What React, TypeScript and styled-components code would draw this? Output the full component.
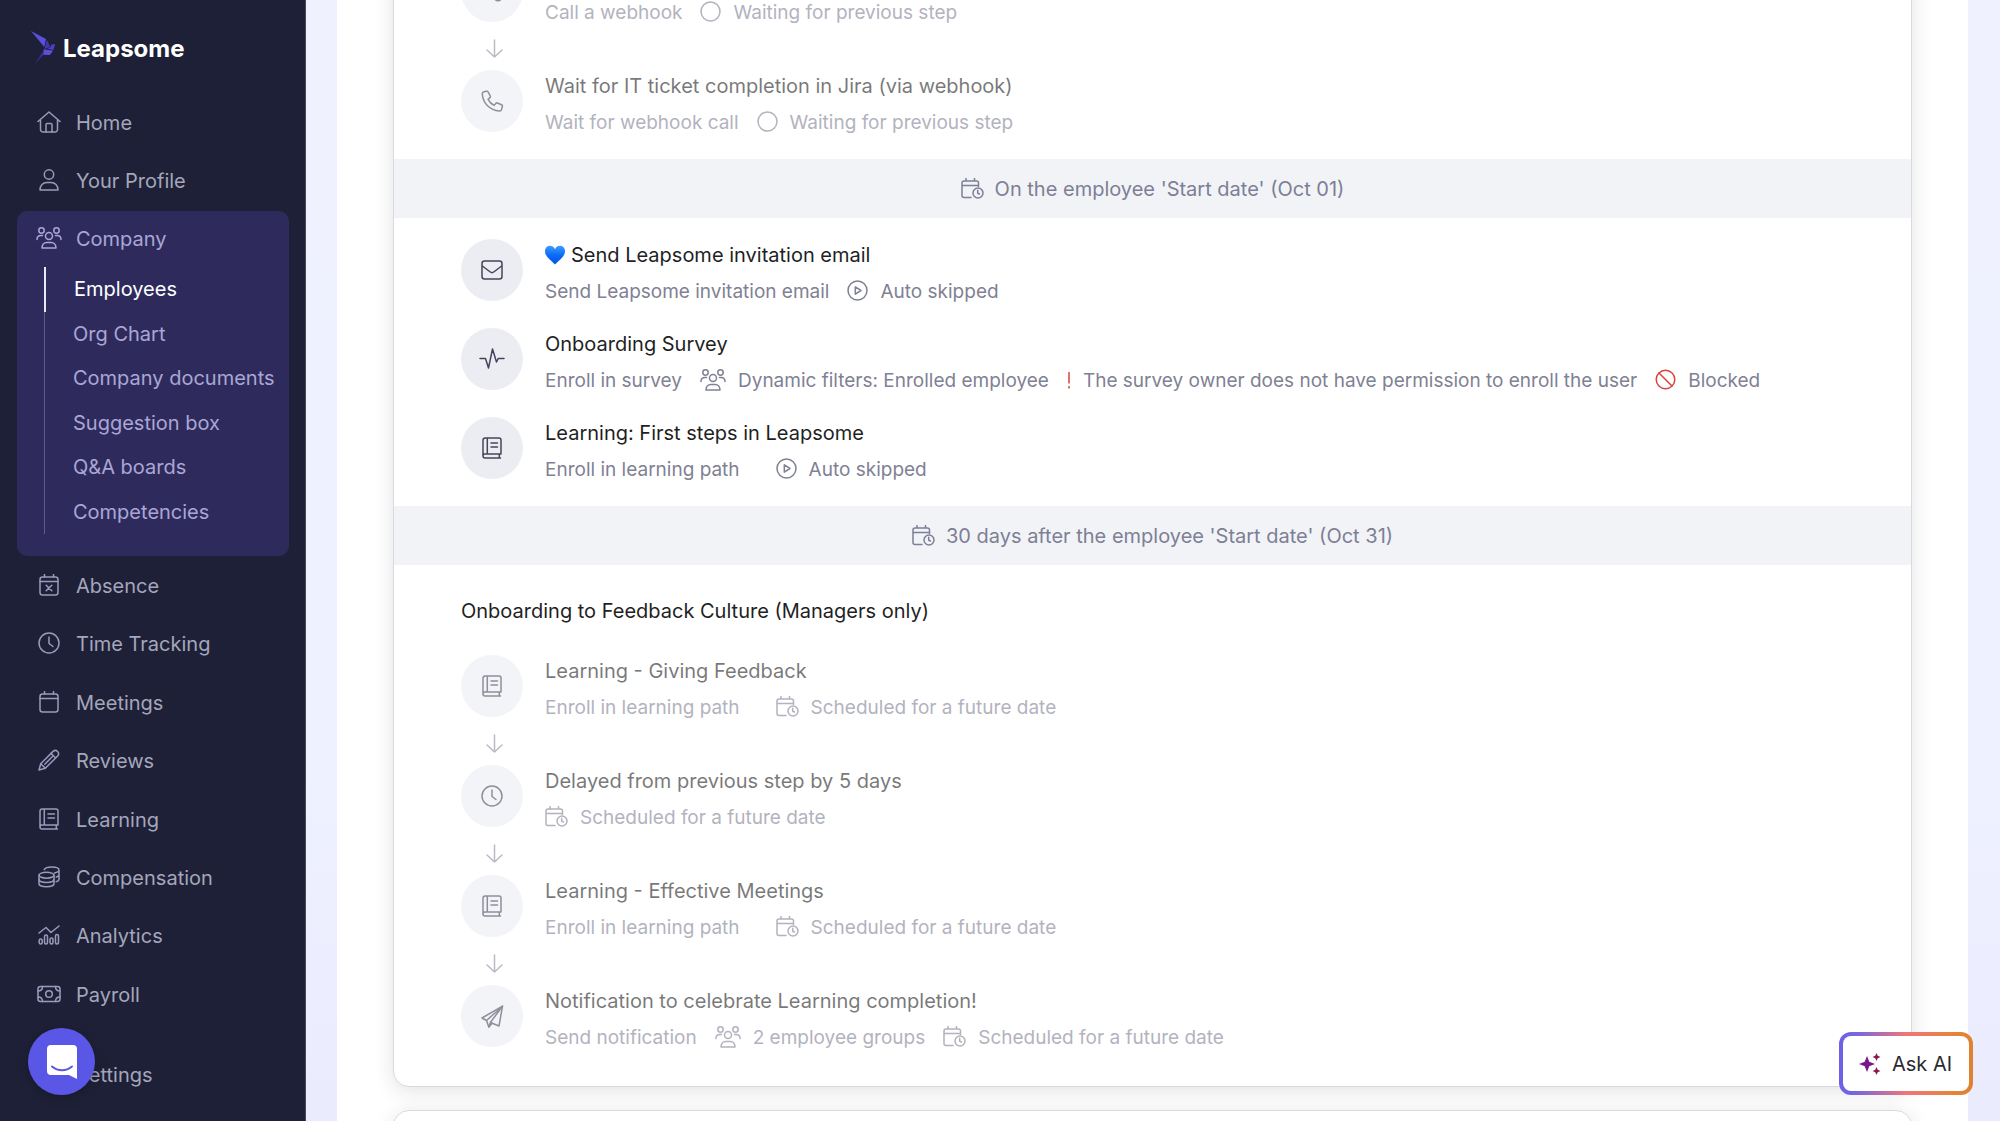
import React from 'react';
import styled, { createGlobalStyle } from 'styled-components';

const GlobalStyle = createGlobalStyle`
  *, *::before, *::after { box-sizing: border-box; }
  html, body { margin: 0; padding: 0; }
  body {
    font-family: Inter, "Liberation Sans", sans-serif;
    font-size: 20px;
    color: #1f1f24;
    background: #f0f2ff;
  }
  ul { list-style: none; margin: 0; padding: 0; }
  a { color: inherit; text-decoration: none; }
  h3, h4, p { margin: 0; font-size: inherit; font-weight: inherit; }
`;

/* ---------- icons ---------- */

type IconName = keyof typeof shapes;

const shapes = {
  home: {
    w: 24, h: 22,
    d: <><path d="M1 10.500 12 1l11 9.500" /><path d="M3.500 9v9.500a2.500 2.500 0 0 0 2.500 2.500h12a2.500 2.500 0 0 0 2.500-2.500V9" /><path d="M9 21v-7.500a1 1 0 0 1 1-1h4a1 1 0 0 1 1 1V21" /></>,
  },
  user: {
    w: 20, h: 22,
    d: <><circle cx="10" cy="5.500" r="4.700" /><path d="M1 21c0-4.500 3-7.500 7-7.500h4c4 0 7 3 7 7.500z" /></>,
  },
  people: {
    w: 26, h: 22,
    d: <><circle cx="5.500" cy="3.500" r="2.700" /><circle cx="20.500" cy="3.500" r="2.700" /><circle cx="13" cy="9" r="3.500" /><path d="M1 12.500c0-2.600 1.600-4 4-4h1.500M25 12.500c0-2.600-1.600-4-4-4h-1.500" /><path d="M6 21c0-3.300 2-5.500 4.800-5.500h4.400C18 15.500 20 17.700 20 21z" /></>,
  },
  absence: {
    w: 20, h: 22,
    d: <><rect x="1" y="3" width="18" height="18" rx="2.500" /><path d="M1 7.500h18M5.500.500V3M14.500.500V3M7.200 11.200l5.600 5.600M12.800 11.200l-5.600 5.600" /></>,
  },
  clock: {
    w: 22, h: 22,
    d: <><circle cx="11" cy="11" r="10" /><path d="M11 5v6.500l4 3" /></>,
  },
  calendar: {
    w: 20, h: 22,
    d: <><rect x="1" y="3" width="18" height="18" rx="2.500" /><path d="M1 7.500h18M5.500.500V3M14.500.500V3" /></>,
  },
  pencil: {
    w: 22, h: 22,
    d: <><path d="M1 21l1.700-6.300L15.300 2.100a3.300 3.300 0 0 1 4.600 4.600L7.300 19.300z" /><path d="M2.700 14.700l4.600 4.600M13 4.400 17.600 9M14.200 7.800l-7.400 7.400" /></>,
  },
  book: {
    w: 20, h: 22,
    d: <><path d="M18.500 17H3a2 2 0 0 0 0 4h15.500M1 19V3.200C1 2 2 1 3.200 1H17c1.200 0 2 .8 2 2v14M17.300 17v4M5.300 1v16M9 6h6.500M9 10h6.500" /></>,
  },
  coins: {
    w: 22, h: 22,
    d: <><ellipse cx="8.500" cy="9.200" rx="7.500" ry="3" /><path d="M1 9.200v8.600c0 1.700 3.400 3 7.500 3s7.500-1.300 7.500-3V9.200" /><path d="M1 13.500c0 1.700 3.400 3 7.500 3s7.500-1.300 7.500-3M6.200 3.700C7 2.200 10 1.100 13.600 1.100c4.100 0 7.400 1.300 7.400 3s-2 2.500-4.500 3M21 4.100v9.400c0 1-1.200 1.700-2.800 2.200M21 8.800c0 1-1.200 1.800-2.800 2.300" /></>,
  },
  chart: {
    w: 22, h: 20,
    d: <><path d="M1 8l7-5.500 5 5L21 1" /><rect x="1.200" y="14" width="3" height="5" rx="1.500" /><rect x="6.500" y="10" width="3" height="9" rx="1.500" /><rect x="12" y="13" width="3" height="6" rx="1.500" /><rect x="17.500" y="9.500" width="3" height="9.500" rx="1.500" /></>,
  },
  cash: {
    w: 24, h: 18,
    d: <><rect x="1" y="1.500" width="22" height="15" rx="2.500" /><circle cx="12" cy="9" r="3.300" /><path d="M1 6c2.800 0 4.500-1.700 4.500-4.500M23 6c-2.800 0-4.500-1.700-4.500-4.500M1 12c2.800 0 4.500 1.700 4.500 4.500M23 12c-2.800 0-4.500 1.700-4.500 4.500" /></>,
  },
  schedule: {
    w: 23, h: 21,
    d: <><path d="M10 19.500H3a2 2 0 0 1-2-2V5c0-1.100.9-2 2-2h12.500c1.100 0 2 .9 2 2v3.500M1 7.500h16.500M5 .500V3M13.500.500V3" /><circle cx="17" cy="15" r="5" /><path d="M16.700 12.300v3l1.800.7" /></>,
  },
  circle: { w: 21, h: 21, d: <circle cx="10.500" cy="10.500" r="9.500" /> },
  play: {
    w: 21, h: 21,
    d: <><circle cx="10.500" cy="10.500" r="9.500" /><path d="M8.300 6.800v7.400l5.700-3.700z" /></>,
  },
  blocked: {
    w: 21, h: 21,
    d: <><circle cx="10.500" cy="10.500" r="9.300" /><path d="M4 4l13 13" /></>,
  },
  alert: { w: 4, h: 18, d: <path d="M2 1.500v10.500M2 15.500v1.500" /> },
  phone: {
    w: 23, h: 22,
    d: <path d="M5.600 1.200 3 1.800A2.200 2.200 0 0 0 1.300 4.200C2 13.300 9 20.300 18.200 21a2.200 2.200 0 0 0 2.400-1.700l.8-3a1.300 1.300 0 0 0-.8-1.600l-4.300-1.700a1.300 1.300 0 0 0-1.500.4l-1.600 2a13.500 13.500 0 0 1-6.100-6.100l1.900-1.700c.4-.3.500-.9.300-1.400L7.200 2a1.400 1.400 0 0 0-1.600-.8z" />,
  },
  mail: {
    w: 22, h: 20,
    d: <><rect x="1" y="1" width="20" height="18" rx="2.500" /><path d="M1.300 6l8 6a2.800 2.800 0 0 0 3.400 0l8-6" /></>,
  },
  pulse: { w: 26, h: 24, d: <path d="M1 11.500h5.500l3 9.500L13.500 2l4 13 1.700-3.500H25" /> },
  webhook: {
    w: 22, h: 22,
    d: <><circle cx="5" cy="14" r="3.700" /><circle cx="17" cy="17" r="3.700" /><circle cx="11" cy="5" r="4" /></>,
  },
  plane: {
    w: 23, h: 23,
    d: <><path d="M21.500 1.200 1 13l4.500 2.500 2.300 6.500 3.400-3.800L18 21z" /><path d="M21.500 1.200 5.500 15.500M21.500 1.200 9.500 17.300 7.800 22M9.500 17.300l1.700.9" /></>,
  },
  down: { w: 17, h: 19, d: <path d="M8.500 1v17M1 11l7.500 7L16 11" /> },
};

const Svg = styled.svg`
  display: block;
  flex: none;
  fill: none;
  stroke: currentColor;
  stroke-width: 1.5;
  stroke-linecap: round;
  stroke-linejoin: round;
`;

function Icon({ name }: { name: IconName }) {
  const s = shapes[name];
  return (
    <Svg width={s.w} height={s.h} viewBox={`0 0 ${s.w} ${s.h}`} aria-hidden="true">
      {s.d}
    </Svg>
  );
}

/* ---------- shell ---------- */

const Shell = styled.div`
  display: grid;
  grid-template-columns: 306px minmax(0, 1fr);
  height: 100vh;
  overflow: hidden;
`;

const Sidebar = styled.aside`
  background: #1e2037;
  border-right: 1px solid #4a4b5c;
  color: #a5a6bb;
  padding: 0 16px 0 17px;
`;

const Logo = styled.a`
  display: flex;
  align-items: center;
  gap: 7px;
  height: 94px;
  padding: 2px 0 0 14px;
  color: #fff;
  font-size: 24px;
  font-weight: 700;
`;

const NavList = styled.ul`
  display: flex;
  flex-direction: column;
`;

const AreaList = styled.ul`
  display: grid;
  grid-auto-rows: 1fr;
  height: 467px;
`;

const NavLink = styled.a`
  display: flex;
  align-items: center;
  gap: 14px;
  height: 58px;
  padding-left: 19px;
`;

const NavIcon = styled.span`
  display: flex;
  justify-content: center;
  width: 26px;
  padding-bottom: 2px;
  color: #9a9abb;
`;

const OpenGroup = styled.li`
  margin: 1px 0;
  padding-bottom: 22px;
  border-radius: 10px;
  background: #2e2b5c;
  color: #aaa6d6;

  ${NavLink} { height: 56px; }
  ${NavIcon} { color: #aaa6d6; }
`;

const SubList = styled.ul`
  display: grid;
  grid-auto-rows: 1fr;
  height: 267px;
  margin-left: 27px;
`;

const SubLink = styled.a<{ $active?: boolean }>`
  display: flex;
  align-items: center;
  height: 100%;
  padding-left: 28px;
  white-space: nowrap;
  color: ${p => (p.$active ? '#fff' : 'inherit')};
  border-left: ${p => (p.$active ? '2px solid #e9e8f5' : '1px solid #5f5c84')};
`;

const NavFooter = styled.div`
  padding-top: 22px;
`;

const ChatButton = styled.button`
  position: fixed;
  left: 28px;
  bottom: 26px;
  display: grid;
  place-items: center;
  width: 67px;
  height: 67px;
  padding: 0;
  border: 0;
  border-radius: 50%;
  background: #5b57e6;
  box-shadow: 0 2px 12px rgba(0, 0, 0, 0.25);
`;

/* ---------- workflow ---------- */

const Main = styled.main`
  padding: 0 32px 0 31px;
  background: linear-gradient(180deg, #eff1ff 0%, #eef1ff 70%, #ebebfe 100%);
  overflow: hidden;
`;

const Page = styled.div`
  display: flow-root;
  min-height: 100%;
  padding: 0 56px;
  background: #fff;
`;

const Card = styled.section<{ $scrolled?: boolean }>`
  margin-top: ${p => (p.$scrolled ? '-62px' : '23px')};
  min-height: 64px;
  border: 1px solid #d9dade;
  border-radius: 16px;
  background: #fff;
  box-shadow: 0 4px 20px rgba(30, 32, 55, 0.13);
`;

const Steps = styled.div<{ $last?: boolean }>`
  padding: 19px 67px ${p => (p.$last ? 31 : 19)}px;
`;

const StepList = styled.ul<{ $gap: number }>`
  display: flex;
  flex-direction: column;
  gap: ${p => p.$gap}px;
`;

const StepRow = styled.div<{ $dim?: boolean }>`
  display: flex;
  align-items: flex-start;
  gap: 22px;
  height: 72px;
  opacity: ${p => (p.$dim ? 0.6 : 1)};
`;

const Bubble = styled.span`
  display: grid;
  place-items: center;
  flex: none;
  width: 62px;
  height: 62px;
  margin-top: 2px;
  border-radius: 50%;
  background: #ecedf3;
  color: #44455a;
`;

const StepTitle = styled.h4`
  display: flex;
  align-items: center;
  gap: 6px;
  min-height: 36px;
  line-height: 36px;
`;

const Meta = styled.p`
  display: flex;
  gap: 18px;
  padding-top: 1px;
  font-size: 19px;
  line-height: 36px;
  white-space: nowrap;
  color: #7f8194;
`;

const Tag = styled.span`
  display: inline-flex;
  align-items: center;
  gap: 12px;
`;

const Tint = styled.span<{ $red?: boolean }>`
  display: inline-flex;
  padding-bottom: 3px;
  color: ${p => (p.$red ? '#d9453d' : 'inherit')};
`;

const Connector = styled.div`
  display: flex;
  align-items: center;
  justify-content: center;
  width: 66px;
  height: 38px;
  padding-bottom: 2px;
  color: #b9bbc2;
`;

const DateBand = styled.h3`
  display: flex;
  align-items: center;
  justify-content: center;
  gap: 11px;
  height: 59px;
  background: #f2f3f6;
  color: #7d7f96;
`;

const GroupTitle = styled.h3`
  padding: 9px 0 24px;
  line-height: 36px;
`;

const AskRing = styled.button`
  position: fixed;
  right: 27px;
  bottom: 26px;
  padding: 4px;
  border: 0;
  border-radius: 12px;
  background: linear-gradient(90deg, #6c60e6 0%, #7c68dc 15%, #f07578 50%, #e5843a 85%, #de822f 100%);
  color: #2a2a2e;
  font: inherit;
`;

const AskFace = styled.span`
  display: flex;
  align-items: center;
  gap: 11px;
  width: 126px;
  height: 55px;
  padding-left: 16px;
  border-radius: 8px;
  background: #fff;
  white-space: nowrap;
`;

/* ---------- data ---------- */

type MetaItem = { icon?: IconName; text?: string; red?: boolean };
type Step = { icon: IconName; title?: string; heart?: boolean; meta: MetaItem[] };

const waiting: MetaItem = { icon: 'circle', text: 'Waiting for previous step' };
const skipped: MetaItem = { icon: 'play', text: 'Auto skipped' };
const scheduled: MetaItem = { icon: 'schedule', text: 'Scheduled for a future date' };

const webhookSteps: Step[] = [
  { icon: 'webhook', meta: [{ text: 'Call a webhook' }, waiting] },
  { icon: 'phone', title: 'Wait for IT ticket completion in Jira (via webhook)', meta: [{ text: 'Wait for webhook call' }, waiting] },
];

const startSteps: Step[] = [
  { icon: 'mail', title: 'Send Leapsome invitation email', heart: true, meta: [{ text: 'Send Leapsome invitation email' }, skipped] },
  {
    icon: 'pulse',
    title: 'Onboarding Survey',
    meta: [
      { text: 'Enroll in survey' },
      { icon: 'people', text: 'Dynamic filters: Enrolled employee' },
      { icon: 'alert', text: 'The survey owner does not have permission to enroll the user', red: true },
      { icon: 'blocked', text: 'Blocked', red: true },
    ],
  },
  { icon: 'book', title: 'Learning: First steps in Leapsome', meta: [{ text: 'Enroll in learning path' }, {}, skipped] },
];

const feedbackSteps: Step[] = [
  { icon: 'book', title: 'Learning - Giving Feedback', meta: [{ text: 'Enroll in learning path' }, {}, scheduled] },
  { icon: 'clock', title: 'Delayed from previous step by 5 days', meta: [scheduled] },
  { icon: 'book', title: 'Learning - Effective Meetings', meta: [{ text: 'Enroll in learning path' }, {}, scheduled] },
  {
    icon: 'plane',
    title: 'Notification to celebrate Learning completion!',
    meta: [{ text: 'Send notification' }, { icon: 'people', text: '2 employee groups' }, scheduled],
  },
];

const topNav: [IconName, string][] = [['home', 'Home'], ['user', 'Your Profile']];
const subNav = ['Employees', 'Org Chart', 'Company documents', 'Suggestion box', 'Q&A boards', 'Competencies'];
const areaNav: [IconName, string][] = [
  ['absence', 'Absence'],
  ['clock', 'Time Tracking'],
  ['calendar', 'Meetings'],
  ['pencil', 'Reviews'],
  ['book', 'Learning'],
  ['coins', 'Compensation'],
  ['chart', 'Analytics'],
  ['cash', 'Payroll'],
];

/* ---------- parts ---------- */

function NavEntry({ icon, label }: { icon?: IconName; label: string }) {
  return (
    <NavLink href="#">
      <NavIcon>{icon && <Icon name={icon} />}</NavIcon>
      {label}
    </NavLink>
  );
}

function Heart() {
  return (
    <svg width="20" height="20" viewBox="0 0 20 20" aria-hidden="true">
      <defs>
        <linearGradient id="heart" x1="0" y1="0" x2="0" y2="1">
          <stop offset="0" stopColor="#3f9bff" />
          <stop offset="0.500" stopColor="#0a6cf8" />
          <stop offset="1" stopColor="#0a4fe0" />
        </linearGradient>
      </defs>
      <path fill="url(#heart)" d="M10 4.200C8.800 1.800 7 .8 5 .8 2.200.8 0 3 0 6.200c0 5.300 5.500 8.800 10 13.300 4.500-4.500 10-8 10-13.300C20 3 17.800.8 15 .8c-2 0-3.800 1-5 3.400z" />
    </svg>
  );
}

function StepView({ step, dim }: { step: Step; dim?: boolean }) {
  return (
    <StepRow $dim={dim}>
      <Bubble><Icon name={step.icon} /></Bubble>
      <div>
        <StepTitle>
          {step.heart && <Heart />}
          {step.title}
        </StepTitle>
        <Meta>
          {step.meta.map((m, i) => (
            <Tag key={i}>
              {m.icon && <Tint $red={m.red}><Icon name={m.icon} /></Tint>}
              {m.text}
            </Tag>
          ))}
        </Meta>
      </div>
    </StepRow>
  );
}

function Chain({ steps }: { steps: Step[] }) {
  return (
    <StepList $gap={0}>
      {steps.map((s, i) => (
        <li key={i}>
          {i > 0 && <Connector><Icon name="down" /></Connector>}
          <StepView step={s} dim />
        </li>
      ))}
    </StepList>
  );
}

export default function App() {
  return (
    <>
      <GlobalStyle />
      <Shell>
        <Sidebar>
          <Logo href="#">
            <svg width="25" height="34" viewBox="0 0 25 34" aria-hidden="true">
              <path fill="#5a50dc" d="M0 0 15 8 13.300 16z" />
              <path fill="#4038a8" d="M15.800 8.800 19.500 16 13.500 18z" />
              <path fill="#4a42c0" d="M19.800 16l.7-2.500 3.800-.2-2 5.700-6-1.300z" />
              <path fill="#5a50dc" d="M12.700 18.300 22.200 19.700l-3.400 4.300-6.600-.3z" />
              <path fill="#34309a" d="M12 20.500 12 24.300 3.800 33z" />
            </svg>
            Leapsome
          </Logo>
          <nav>
            <NavList>
              {topNav.map(([icon, label]) => (
                <li key={label}><NavEntry icon={icon} label={label} /></li>
              ))}
              <OpenGroup>
                <NavEntry icon="people" label="Company" />
                <SubList>
                  {subNav.map((label, i) => (
                    <li key={label}><SubLink href="#" $active={i === 0}>{label}</SubLink></li>
                  ))}
                </SubList>
              </OpenGroup>
            </NavList>
            <AreaList>
              {areaNav.map(([icon, label]) => (
                <li key={label}><NavEntry icon={icon} label={label} /></li>
              ))}
            </AreaList>
            <NavFooter>
              <NavEntry label="Settings" />
            </NavFooter>
          </nav>
        </Sidebar>

        <Main>
          <Page>
            <Card $scrolled>
              <Steps><Chain steps={webhookSteps} /></Steps>
              <DateBand><Icon name="schedule" />On the employee 'Start date' (Oct 01)</DateBand>
              <Steps>
                <StepList $gap={17}>
                  {startSteps.map(s => <li key={s.title}><StepView step={s} /></li>)}
                </StepList>
              </Steps>
              <DateBand><Icon name="schedule" />30 days after the employee 'Start date' (Oct 31)</DateBand>
              <Steps $last>
                <GroupTitle>Onboarding to Feedback Culture (Managers only)</GroupTitle>
                <Chain steps={feedbackSteps} />
              </Steps>
            </Card>
            <Card />
          </Page>
        </Main>
      </Shell>

      <ChatButton type="button" aria-label="Open chat">
        <svg width="30" height="34" viewBox="0 0 30 34" aria-hidden="true">
          <path fill="#fff" d="M4 0h22a4 4 0 0 1 4 4v30l-8-4H4a4 4 0 0 1-4-4V4a4 4 0 0 1 4-4z" />
          <path fill="none" stroke="#5b57e6" strokeWidth="2" strokeLinecap="round" d="M5 21.500c6 5 14 5 20 0" />
        </svg>
      </ChatButton>

      <AskRing type="button">
        <AskFace>
          <svg width="22" height="22" viewBox="0 0 22 22" aria-hidden="true">
            <path fill="#7a1a86" d="M8 3l2.300 5.700L16 11l-5.700 2.300L8 19l-2.300-5.700L0 11l5.700-2.300z" />
            <path fill="#86174f" d="M17.500 0l1.200 2.800 2.800 1.200-2.800 1.200-1.200 2.800-1.200-2.800L13.500 4l2.800-1.200zM17.500 14l1.200 2.800 2.800 1.200-2.800 1.200-1.200 2.800-1.200-2.800-2.800-1.200 2.800-1.200z" />
          </svg>
          Ask AI
        </AskFace>
      </AskRing>
    </>
  );
}
